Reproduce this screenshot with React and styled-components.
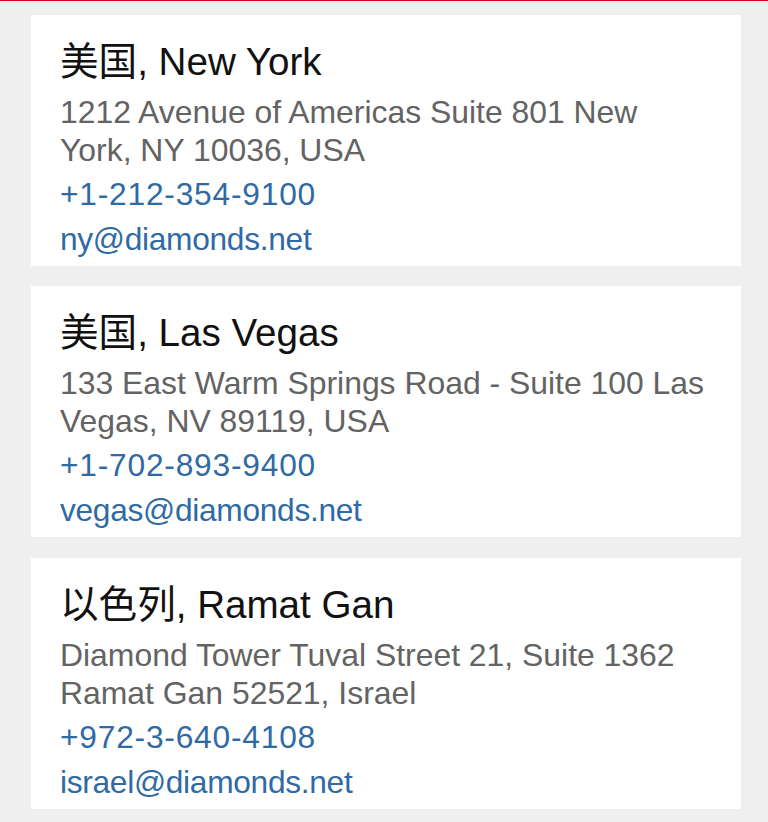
import React from "react";
import styled, { createGlobalStyle } from "styled-components";

const GlobalStyle = createGlobalStyle`
  html, body {
    margin: 0;
    padding: 0;
    background: #efefef;
  }
  body {
    font-family: "Liberation Sans", "Noto Sans CJK SC", Arial, sans-serif;
  }
`;

const Page = styled.div`
  min-height: 822px;
  box-sizing: border-box;
  border-top: 1px solid #d8001c;
  padding: 14px 27px 0 31px;
  display: flex;
  flex-direction: column;
  gap: 20.4px;
`;

const Card = styled.div`
  background: #ffffff;
  height: 251px;
  box-sizing: border-box;
  padding: 24px 29px 4px;
  display: flex;
  flex-direction: column;
`;

const Title = styled.h2`
  margin: 0 0 8px;
  font-size: 38.6px;
  line-height: 46px;
  font-weight: normal;
  color: #111;
  font-family: "Liberation Sans", "Noto Sans CJK SC", sans-serif;
`;

const Address = styled.p`
  margin: 0;
  font-size: 31.9px;
  line-height: 38px;
  color: #636363;
`;

const Phone = styled.a`
  display: block;
  margin-top: 3px;
  font-size: 31.7px;
  line-height: 45px;
  letter-spacing: 0.8px;
  color: #2f6aa5;
  text-decoration: none;
`;

const Email = styled(Phone)`
  margin-top: 0;
  letter-spacing: -0.3px;
`;

const offices = [
  {
    title: "美国, New York",
    address: "1212 Avenue of Americas Suite 801 New York, NY 10036, USA",
    phone: "+1-212-354-9100",
    email: "ny@diamonds.net",
  },
  {
    title: "美国, Las Vegas",
    address: "133 East Warm Springs Road - Suite 100 Las Vegas, NV 89119, USA",
    phone: "+1-702-893-9400",
    email: "vegas@diamonds.net",
  },
  {
    title: "以色列, Ramat Gan",
    address: "Diamond Tower Tuval Street 21, Suite 1362 Ramat Gan 52521, Israel",
    phone: "+972-3-640-4108",
    email: "israel@diamonds.net",
  },
];

export default function App() {
  return (
    <>
      <GlobalStyle />
      <Page>
        {offices.map((o) => (
          <Card key={o.email}>
            <Title>{o.title}</Title>
            <Address>{o.address}</Address>
            <Phone href={`tel:${o.phone}`}>{o.phone}</Phone>
            <Email href={`mailto:${o.email}`}>{o.email}</Email>
          </Card>
        ))}
      </Page>
    </>
  );
}
